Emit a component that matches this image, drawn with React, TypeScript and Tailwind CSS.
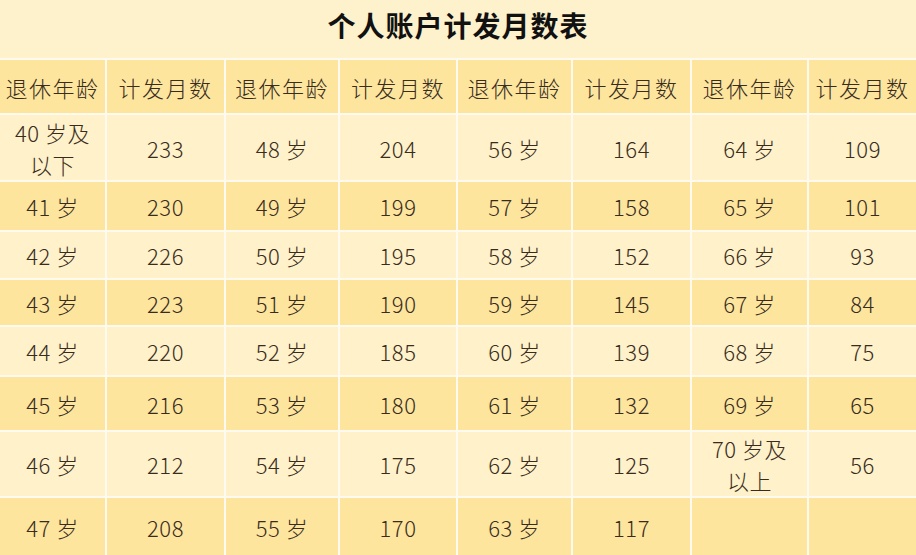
import React from "react";

type Cell = React.ReactNode;

const header = ["退休年龄", "计发月数", "退休年龄", "计发月数", "退休年龄", "计发月数", "退休年龄", "计发月数"];

const rows: Cell[][] = [
  [
    <>40 岁及<br />以下</>,
    "233", "48 岁", "204", "56 岁", "164", "64 岁", "109",
  ],
  ["41 岁", "230", "49 岁", "199", "57 岁", "158", "65 岁", "101"],
  ["42 岁", "226", "50 岁", "195", "58 岁", "152", "66 岁", "93"],
  ["43 岁", "223", "51 岁", "190", "59 岁", "145", "67 岁", "84"],
  ["44 岁", "220", "52 岁", "185", "60 岁", "139", "68 岁", "75"],
  ["45 岁", "216", "53 岁", "180", "61 岁", "132", "69 岁", "65"],
  [
    "46 岁", "212", "54 岁", "175", "62 岁", "125",
    <>70 岁及<br />以上</>,
    "56",
  ],
  ["47 岁", "208", "55 岁", "170", "63 岁", "117", "", ""],
];

const rowHeights = ["h-[65px]", "h-[48px]", "h-[46px]", "h-[45px]", "h-[48px]", "h-[53px]", "h-[64px]", "h-[57px]"];

export default function App() {
  return (
    <div
      className="w-[916px] h-[555px] overflow-hidden bg-[#fef2cc] text-[#372c1d]"
      style={{ fontFamily: '"Noto Sans CJK SC", "Noto Sans", sans-serif' }}
    >
      <div className="h-[58px] flex items-start justify-center pt-[5px]">
        <h1 className="text-[28px] leading-[40px] font-bold text-[#111] tracking-[1px]">个人账户计发月数表</h1>
      </div>
      <div className="grid grid-cols-[105px_117px_112px_116px_113px_117px_115px_107px] gap-[2px] bg-[#fffaf0] pt-[2px]">
        {header.map((h, i) => (
          <div key={i} className="h-[53px] flex items-center justify-center bg-[#fee59e] text-[22px] leading-none font-light tracking-[1.5px]">
            {h}
          </div>
        ))}
        {rows.map((row, r) =>
          row.map((c, i) => (
            <div
              key={`${r}-${i}`}
              className={`${rowHeights[r]} flex items-center justify-center text-center text-[22px] leading-[32px] font-light tracking-[0.5px] ${
                r % 2 === 0 ? "bg-[#fff1c9]" : "bg-[#fee59e]"
              }`}
            >
              {c}
            </div>
          ))
        )}
      </div>
    </div>
  );
}
